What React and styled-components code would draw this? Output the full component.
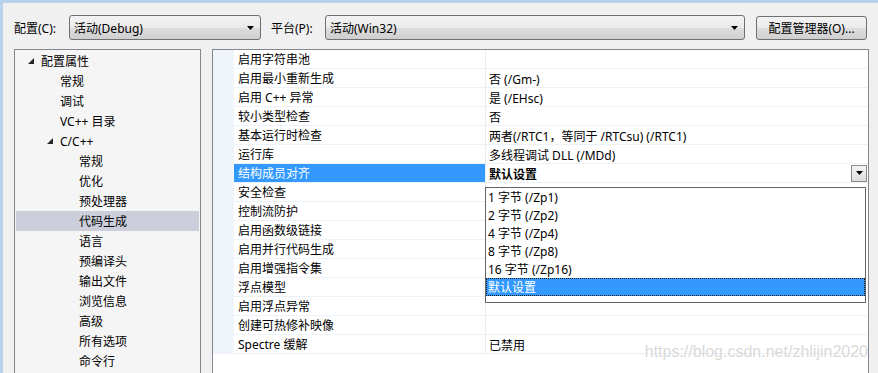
import styled, { createGlobalStyle } from "styled-components";

const GlobalStyle = createGlobalStyle`
  body {
    margin: 0;
    background: #f0f0f0;
  }
`;

const Window = styled.div`
  width: 878px;
  height: 373px;
  box-sizing: border-box;
  border-top: 3px solid #b9d1ea;
  border-left: 3px solid #b9d1ea;
  background: #f0f0f0;
  overflow: hidden;
  font-family: "Noto Sans", "Noto Sans CJK SC", sans-serif;
  font-size: 12px;
  color: #000;
`;

// Top toolbar with configuration / platform combos
const Toolbar = styled.div`
  display: flex;
  align-items: center;
  height: 25px;
  margin-top: 12px;
  padding-left: 11px;
`;

const Label = styled.span`
  width: ${(p) => p.$w}px;
  margin-left: ${(p) => p.$gap || 0}px;
  flex: none;
`;

const Combo = styled.div`
  width: ${(p) => p.$w}px;
  height: 25px;
  box-sizing: border-box;
  border: 1px solid #707070;
  border-radius: 3px;
  background: linear-gradient(#f2f2f2 0%, #ebebeb 50%, #dddddd 51%, #cfcfcf 100%);
  display: flex;
  align-items: center;
  padding: 0 6px 0 4px;
  flex: none;
`;

const ComboText = styled.span`
  flex: 1;
`;

const Arrow = () => (
  <svg width="7" height="4" viewBox="0 0 7 4">
    <polygon points="0,0 7,0 3.5,4" fill="#000" />
  </svg>
);

const Button = styled.div`
  margin-left: 11px;
  width: 111px;
  height: 24px;
  box-sizing: border-box;
  border: 1px solid #707070;
  border-radius: 3px;
  background: linear-gradient(#f2f2f2 0%, #ebebeb 50%, #dddddd 51%, #cfcfcf 100%);
  display: flex;
  align-items: center;
  justify-content: center;
  flex: none;
`;

const Body = styled.div`
  display: flex;
  margin-top: 9px;
  padding-left: 11px;
  gap: 11px;
`;

// Left tree
const Tree = styled.div`
  width: 187px;
  height: 340px;
  box-sizing: border-box;
  border: 1px solid #828790;
  background: #f5f5f5;
  padding-top: 1px;
`;

const TreeItem = styled.div`
  height: 20px;
  margin: 0 1px;
  display: flex;
  align-items: center;
  padding-left: ${(p) => p.$indent}px;
  background: ${(p) => (p.$selected ? "#cccedb" : "transparent")};
`;

const Toggle = styled.span`
  width: 11px;
  margin-left: -18px;
  margin-right: 7px;
  display: flex;
  justify-content: flex-end;
`;

const Expanded = () => (
  <svg width="6" height="6" viewBox="0 0 6 6">
    <polygon points="6,0 6,6 0,6" fill="#262626" />
  </svg>
);

// Right property grid
const Grid = styled.div`
  position: relative;
  width: 657px;
  height: 340px;
  box-sizing: border-box;
  border: 1px solid #828790;
  background: #fff;
`;

const Row = styled.div`
  display: flex;
  height: 19px;
`;

const Gutter = styled.div`
  width: 21px;
  flex: none;
  background: #f0f5fb;
`;

const NameCell = styled.div`
  width: 252px;
  height: 19px;
  flex: none;
  box-sizing: border-box;
  padding: 2px 0 0 4px;
  line-height: 16px;
  border-bottom: 1px solid #edf2f8;
  border-right: 1px solid #e9ecf0;
  background: ${(p) => (p.$selected ? "#3399ff" : "#fff")};
  color: ${(p) => (p.$selected ? "#fff" : "#000")};
`;

const ValueCell = styled.div`
  flex: 1;
  display: flex;
  align-items: center;
  box-sizing: border-box;
  padding: 2px 0 0 3px;
  height: 19px;
  border-bottom: 1px solid #edf2f8;
  font-weight: ${(p) => (p.$bold ? 700 : 400)};
`;

const CellText = styled.span`
  flex: 1;
`;

const DropButton = styled.div`
  width: 16px;
  height: 17px;
  margin: -2px 1px 0 0;
  box-sizing: border-box;
  border: 1px solid #8a8a8a;
  background: linear-gradient(#f4f4f4, #dcdcdc);
  display: flex;
  align-items: center;
  justify-content: center;
`;

const DropList = styled.div`
  position: absolute;
  left: 272px;
  top: 137px;
  width: 381px;
  height: 116px;
  box-sizing: border-box;
  border: 1px solid #646464;
  background: #fff;
`;

const ListItem = styled.div`
  height: 18px;
  line-height: 17px;
  padding: 1px 0 0 2px;
  box-sizing: border-box;
  background: ${(p) => (p.$selected ? "#3399ff" : "#fff")};
  color: ${(p) => (p.$selected ? "#fff" : "#000")};
  outline: ${(p) => (p.$selected ? "1px dotted #1a1a1a" : "none")};
  outline-offset: -1px;
`;

const Watermark = styled.div`
  position: absolute;
  right: 0px;
  top: 293px;
  font-family: "Liberation Sans", Arial, sans-serif;
  font-size: 16px;
  color: rgba(200, 200, 200, 0.7);
  white-space: nowrap;
`;

const treeItems = [
  { text: "配置属性", indent: 25, toggle: true },
  { text: "常规", indent: 44 },
  { text: "调试", indent: 44 },
  { text: "VC++ 目录", indent: 44 },
  { text: "C/C++", indent: 44, toggle: true },
  { text: "常规", indent: 63 },
  { text: "优化", indent: 63 },
  { text: "预处理器", indent: 63 },
  { text: "代码生成", indent: 63, selected: true },
  { text: "语言", indent: 63 },
  { text: "预编译头", indent: 63 },
  { text: "输出文件", indent: 63 },
  { text: "浏览信息", indent: 63 },
  { text: "高级", indent: 63 },
  { text: "所有选项", indent: 63 },
  { text: "命令行", indent: 63 },
];

const props = [
  ["启用字符串池", ""],
  ["启用最小重新生成", "否 (/Gm-)"],
  ["启用 C++ 异常", "是 (/EHsc)"],
  ["较小类型检查", "否"],
  ["基本运行时检查", "两者(/RTC1，等同于 /RTCsu) (/RTC1)"],
  ["运行库", "多线程调试 DLL (/MDd)"],
  ["结构成员对齐", "默认设置", true],
  ["安全检查", ""],
  ["控制流防护", ""],
  ["启用函数级链接", ""],
  ["启用并行代码生成", ""],
  ["启用增强指令集", ""],
  ["浮点模型", ""],
  ["启用浮点异常", ""],
  ["创建可热修补映像", ""],
  ["Spectre 缓解", "已禁用"],
];

const options = [
  "1 字节 (/Zp1)",
  "2 字节 (/Zp2)",
  "4 字节 (/Zp4)",
  "8 字节 (/Zp8)",
  "16 字节 (/Zp16)",
  "默认设置",
];

export default function App() {
  return (
    <Window>
      <GlobalStyle />
      <Toolbar>
        <Label $w={55}>配置(C):</Label>
        <Combo $w={192}>
          <ComboText>活动(Debug)</ComboText>
          <Arrow />
        </Combo>
        <Label $w={54} $gap={10}>平台(P):</Label>
        <Combo $w={420}>
          <ComboText>活动(Win32)</ComboText>
          <Arrow />
        </Combo>
        <Button>配置管理器(O)...</Button>
      </Toolbar>
      <Body>
        <Tree>
          {treeItems.map((t, i) => (
            <TreeItem key={i} $indent={t.indent} $selected={t.selected}>
              {t.toggle && (
                <Toggle>
                  <Expanded />
                </Toggle>
              )}
              {t.text}
            </TreeItem>
          ))}
        </Tree>
        <Grid>
          {props.map(([name, value, sel], i) => (
            <Row key={i}>
              <Gutter />
              <NameCell $selected={sel}>{name}</NameCell>
              <ValueCell $bold={sel}>
                <CellText>{value}</CellText>
                {sel && (
                  <DropButton>
                    <Arrow />
                  </DropButton>
                )}
              </ValueCell>
            </Row>
          ))}
          <DropList>
            {options.map((o, i) => (
              <ListItem key={i} $selected={i === options.length - 1}>
                {o}
              </ListItem>
            ))}
          </DropList>
          <Watermark>https://blog.csdn.net/zhlijin2020</Watermark>
        </Grid>
      </Body>
    </Window>
  );
}
